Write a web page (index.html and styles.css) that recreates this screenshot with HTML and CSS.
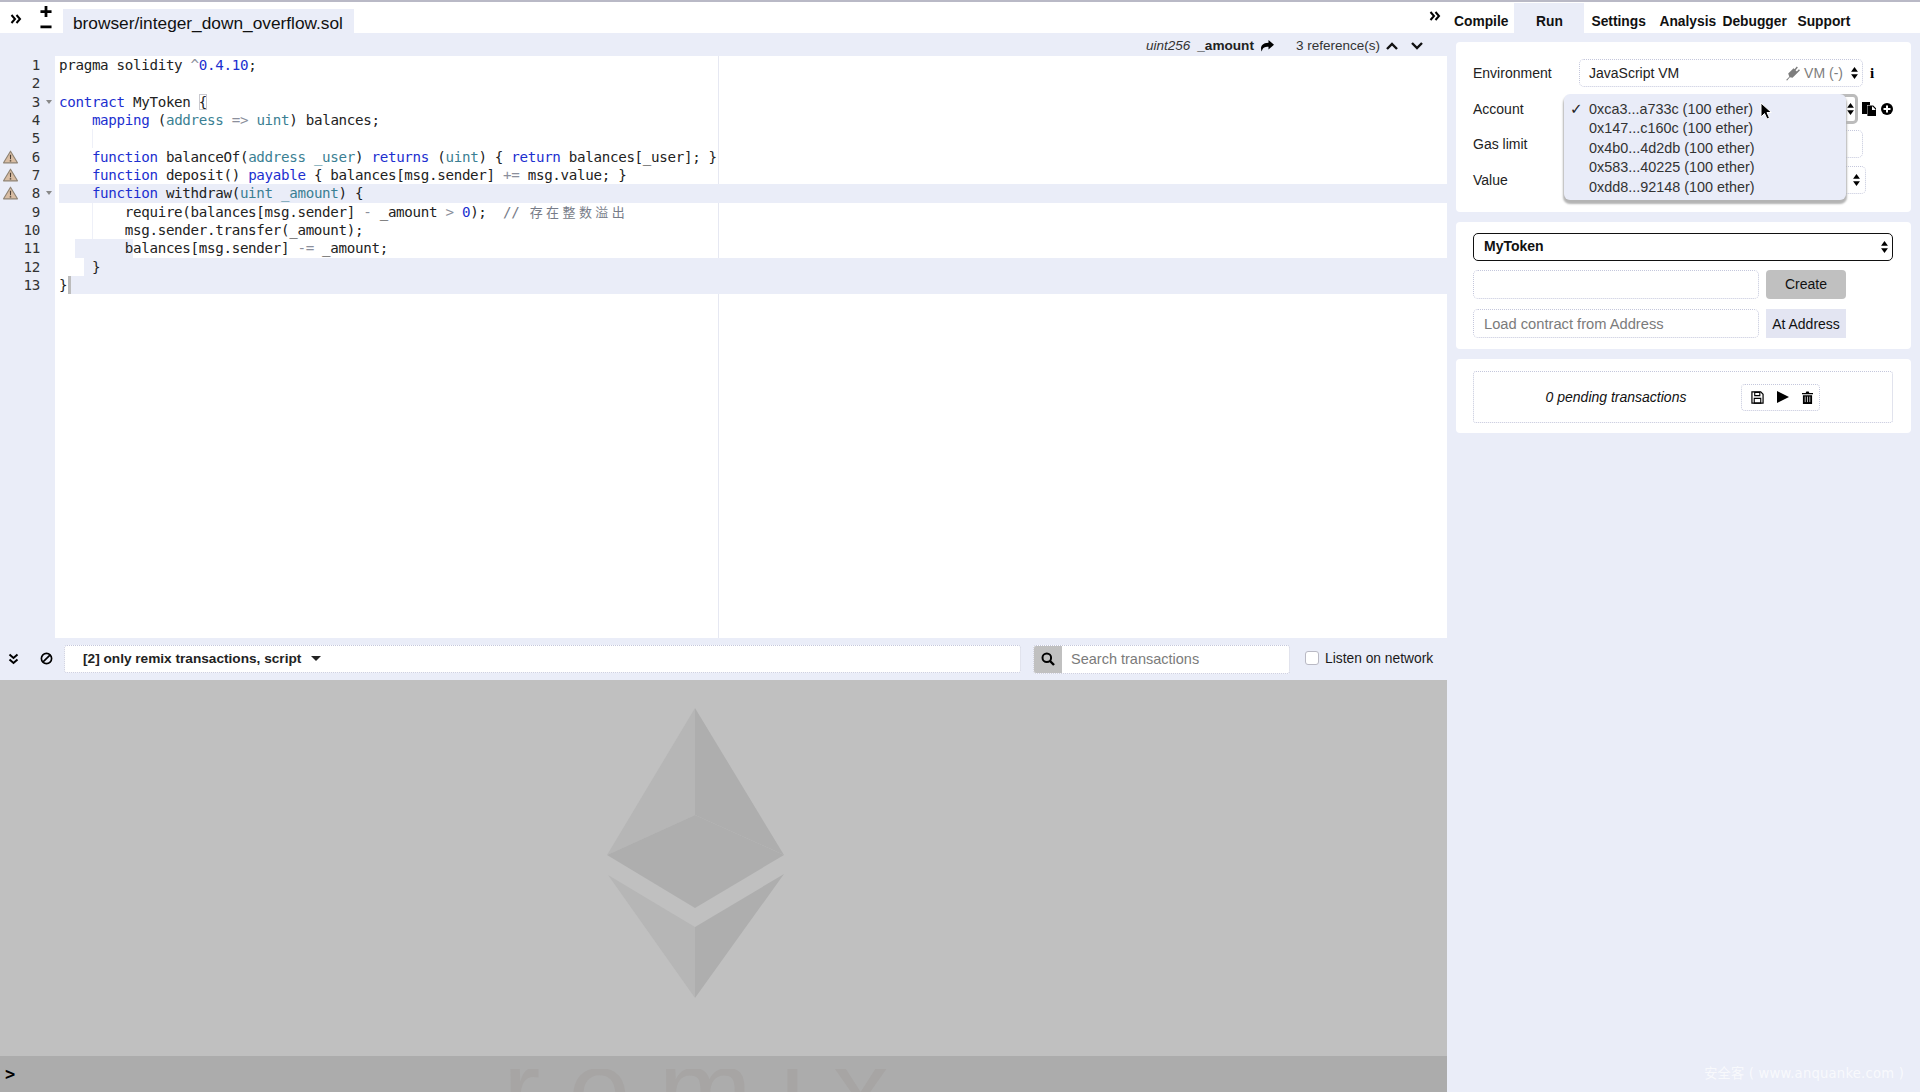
FILE: index.html
```html
<!DOCTYPE html>
<html lang="en">
<head>
<meta charset="utf-8">
<title>Remix</title>
<link rel="stylesheet" href="styles.css">
</head>
<body>
<svg class="sprite" aria-hidden="true">
  <defs>
    <symbol id="updown" viewBox="0 0 8 14"><path d="M4 0 8 5.5H0zM4 14 0 8.5H8z"/></symbol>
    <symbol id="warn" viewBox="0 0 16 14"><path d="M8 .8 15.4 13.2H.6z" fill="#d9bda3" stroke="#8f8373" stroke-width="1.2" stroke-linejoin="round"/><path d="M7.3 4.5h1.4l-.2 5h-1zM7.2 10.4h1.6v1.5H7.2z" fill="#4a3f35"/></symbol>
  </defs>
</svg>
<div class="app">
  <main class="left">
    <div class="tabbar">
      <svg class="ic-chev" viewBox="0 0 12 10"><path d="M1.5 1 5 5 1.5 9M6.5 1 10 5 6.5 9" fill="none" stroke="#000" stroke-width="2"/></svg>
      <svg class="ic-plusminus" viewBox="0 0 12 26"><path d="M4.5 0h3v4.5H12v3H7.500V12h-3V7.500H0v-3h4.500zM0 21h12v3H0z"/></svg>
      <div class="tab">browser/integer_down_overflow.sol</div>
    </div>
    <div class="edhead">
      <span class="ed-type">uint256</span>
      <span class="ed-name">_amount</span>
      <svg class="ic-share" viewBox="0 0 14 12"><path d="M8.500 0 14 4.700 8.500 9.500V6.800C4.500 6.800 2.500 7.800 1.800 11.500.4 9 0 3 8.500 2.700z"/></svg>
      <span class="ed-refs">3 reference(s)</span>
      <svg class="ic-caret" viewBox="0 0 12 8"><path d="M1 7 6 2l5 5" fill="none" stroke="#111" stroke-width="2.400"/></svg>
      <svg class="ic-caret" viewBox="0 0 12 8"><path d="M1 1 6 6l5-5" fill="none" stroke="#111" stroke-width="2.400"/></svg>
    </div>
    <div class="editor">
      <div class="gutter">
        <div class="gl"><i></i><b>1</b></div>
        <div class="gl"><i></i><b>2</b></div>
        <div class="gl"><i></i><b>3</b><em></em></div>
        <div class="gl"><i></i><b>4</b></div>
        <div class="gl"><i></i><b>5</b></div>
        <div class="gl"><svg class="ic-warn"><use href="#warn"/></svg><b>6</b></div>
        <div class="gl"><svg class="ic-warn"><use href="#warn"/></svg><b>7</b></div>
        <div class="gl"><svg class="ic-warn"><use href="#warn"/></svg><b>8</b><em></em></div>
        <div class="gl"><i></i><b>9</b></div>
        <div class="gl"><i></i><b>10</b></div>
        <div class="gl"><i></i><b>11</b></div>
        <div class="gl"><i></i><b>12</b></div>
        <div class="gl"><i></i><b>13</b></div>
      </div>
      <div class="code">
        <div class="margin"></div>
        <div class="ln">pragma solidity <span class="o">^</span><span class="n">0.4.10</span>;</div>
        <div class="ln"></div>
        <div class="ln"><span class="k">contract</span> MyToken <span class="br">{</span></div>
        <div class="ln">    <span class="k">mapping</span> (<span class="t">address</span> <span class="o">=&gt;</span> <span class="t">uint</span>) balances;</div>
        <div class="ln guide"></div>
        <div class="ln">    <span class="k">function</span> balanceOf(<span class="t">address _user</span>) <span class="k">returns</span> (<span class="t">uint</span>) { <span class="k">return</span> balances[_user]; }</div>
        <div class="ln">    <span class="k">function</span> deposit() <span class="k">payable</span> { balances[msg.sender] <span class="o">+=</span> msg.value; }</div>
        <div class="ln hl8">    <span class="k">function</span> withdraw(<span class="t">uint _amount</span>) {</div>
        <div class="ln guide">        require(balances[msg.sender] <span class="o">-</span> _amount <span class="o">&gt;</span> <span class="n">0</span>);  <span class="c">// <span class="cjk">存在整数溢出</span></span></div>
        <div class="ln guide">        msg.sender.transfer(_amount);</div>
        <div class="ln hl11">        balances[msg.sender] <span class="o">-=</span> _amount;</div>
        <div class="ln hl12">    }</div>
        <div class="ln hl13">}<span class="cursor"></span></div>
      </div>
    </div>
    <div class="termbar">
      <svg class="ic-dchev" viewBox="0 0 10 12"><path d="M1 1.500 5 5l4-3.500M1 6.500 5 10l4-3.500" fill="none" stroke="#000" stroke-width="2"/></svg>
      <svg class="ic-ban" viewBox="0 0 14 14"><circle cx="7" cy="7" r="5.500" fill="none" stroke="#000" stroke-width="1.800"/><path d="M3 11 11 3" stroke="#000" stroke-width="1.800"/></svg>
      <div class="filter">[2] only remix transactions, script<span class="tri"></span></div>
      <div class="search">
        <span class="search-ic"><svg class="ic-search" viewBox="0 0 14 14"><circle cx="5.800" cy="5.800" r="4.300" fill="none" stroke="#000" stroke-width="2"/><path d="M9 9l4 4" stroke="#000" stroke-width="2.400"/></svg></span>
        <input class="search-in" placeholder="Search transactions">
      </div>
      <label class="listen"><span class="check"></span>Listen on network</label>
    </div>
    <div class="log">
      <svg class="eth" viewBox="0 0 178 291">
        <path d="M88 0 0 147 88 107z" fill="#b6b6b6"/>
        <path d="M88 0 177 147 88 107z" fill="#aeaeae"/>
        <path d="M0 147 88 107 177 147 88 200z" fill="#aeaeae"/>
        <path d="M1 167 88 219V290z" fill="#b6b6b6"/>
        <path d="M177 166 88 219V290z" fill="#aeaeae"/>
      </svg>
    </div>
    <div class="prompt">&gt;<div class="remix-clip"><span class="remix">remix</span></div></div>
  </main>
  <aside class="right">
    <nav class="nav">
      <svg class="ic-chev nav-chev" viewBox="0 0 12 10"><path d="M1.500 1 5 5 1.500 9M6.500 1 10 5 6.500 9" fill="none" stroke="#000" stroke-width="2"/></svg>
      <span class="nav-i w-compile">Compile</span>
      <span class="nav-i nav-on">Run</span>
      <span class="nav-i w-settings">Settings</span>
      <span class="nav-i w-analysis">Analysis</span>
      <span class="nav-i w-debugger">Debugger</span>
      <span class="nav-i">Support</span>
    </nav>
    <div class="panel">
      <section class="card card-env">
        <div class="row">
          <span class="lbl">Environment</span>
          <div class="sel sel-env">JavaScript VM
            <svg class="ic-plug" viewBox="0 0 14 14"><path d="M1 13 4 10 3 7 8 2 12 6 7 11 4.500 10.500 2 13.500zM8.500 3.500 11 .5l1 1-2.500 3zM10.500 5.500 13 3l1 1-2.500 2.500z" fill="#7d7d7d"/></svg>
            <span class="vm">VM (-)</span>
            <svg class="ic-ud"><use href="#updown"/></svg>
          </div>
          <span class="info">i</span>
        </div>
        <div class="row">
          <span class="lbl">Account</span>
          <div class="sel sel-acc"><svg class="ic-ud"><use href="#updown"/></svg></div>
          <svg class="ic-copy" viewBox="0 0 14 14"><path d="M0 0h8v3H5v9H0z"/><path d="M6 4h5l3 3v7H6z" fill="#fff" stroke="#000" stroke-width="1.200"/><path d="M6 4h4v4h4v6H6z"/></svg>
          <svg class="ic-plus" viewBox="0 0 12 12"><circle cx="6" cy="6" r="6"/><path d="M5 2.500h2V5h2.500v2H7v2.500H5V7H2.500V5H5z" fill="#fff"/></svg>
        </div>
        <div class="row">
          <span class="lbl">Gas limit</span>
          <div class="sel sel-gas"></div>
        </div>
        <div class="row">
          <span class="lbl">Value</span>
          <div class="sel sel-val"><svg class="ic-ud"><use href="#updown"/></svg></div>
        </div>
        <ul class="menu">
          <li class="menu-on">0xca3...a733c (100 ether)</li>
          <li>0x147...c160c (100 ether)</li>
          <li>0x4b0...4d2db (100 ether)</li>
          <li>0x583...40225 (100 ether)</li>
          <li>0xdd8...92148 (100 ether)</li>
        </ul>
        <svg class="pointer" viewBox="0 0 12 18"><path d="M1 1V15L4.500 11.500 7 17 9.500 16 7 10.500H11.500z" fill="#000" stroke="#fff" stroke-width="1"/></svg>
      </section>
      <section class="card card-create">
        <div class="contract">MyToken<svg class="ic-ud"><use href="#updown"/></svg></div>
        <div class="crow"><input class="fld"><button class="btn btn-create">Create</button></div>
        <div class="crow"><input class="fld" placeholder="Load contract from Address"><button class="btn btn-at">At Address</button></div>
      </section>
      <section class="card card-pend">
        <div class="pending">
          <span class="pend-txt">0 pending transactions</span>
          <div class="pend-btns">
            <svg class="ic-save" viewBox="0 0 14 14"><path d="M1 1h9.500L13 3.500V13H1z" fill="none" stroke="#000" stroke-width="1.300"/><path d="M4 1.500h5.500V5H4zM3.500 8h7v5h-7z" fill="none" stroke="#000" stroke-width="1.200"/></svg>
            <svg class="ic-play" viewBox="0 0 12 12"><path d="M0 0 12 6 0 12z"/></svg>
            <svg class="ic-trash" viewBox="0 0 12 14"><path d="M0 2h4l.7-1.500h2.600L8 2h4v1.500H0zM1 4.500h10V14H1z"/><path d="M3.500 6v6M6 6v6M8.500 6v6" stroke="#fff" stroke-width=".8"/></svg>
          </div>
        </div>
      </section>
    </div>
    <div class="wm">安全客 ( www.anquanke.com )</div>
  </aside>
</div>
</body>
</html>
```

FILE: styles.css
```css
* { box-sizing: border-box; }
html, body { margin: 0; height: 100%; }
body { font-family: "Liberation Sans", Arial, sans-serif; font-size: 14px; color: #111; background: #fff; overflow: hidden; }
.sprite { position: absolute; width: 0; height: 0; }
svg { display: block; flex: none; }

.app { display: grid; grid-template-columns: 1447px 473px; height: 1092px; border-top: 2px solid #b9b9c6; }
.left { display: flex; flex-direction: column; min-width: 0; }
.right { display: flex; flex-direction: column; position: relative; }

.tabbar { height: 31px; display: flex; align-items: flex-end; background: #fff; }
.ic-chev { width: 12px; height: 10px; }
.tabbar .ic-chev { margin: 0 0 9px 10px; }
.ic-plusminus { width: 12px; height: 24px; margin: 0 0 3px 18px; }
.tab { margin-left: 11px; width: 291px; height: 24px; padding-left: 10px; background: #eaedf8; font-size: 17.300px; line-height: 29px; color: #111; white-space: nowrap; }

.edhead { height: 23px; background: #eaedf8; display: flex; align-items: center; justify-content: flex-end; padding: 2px 24px 0 0; font-size: 13.500px; }
.ed-type { font-style: italic; color: #333; margin-right: 7px; }
.ed-name { font-weight: 700; color: #222; font-size: 13.600px; }
.ic-share { width: 14px; height: 12px; margin-left: 6px; }
.ed-refs { margin-left: 22px; color: #333; }
.ic-caret { width: 12px; height: 8px; margin-left: 6px; }
.ic-caret + .ic-caret { margin-left: 13px; }

.editor { height: 582px; display: flex; background: #fff; }
.gutter { width: 55px; background: #eaedf8; flex: none; }
.gl { height: 18.330px; display: grid; grid-template-columns: 15px 22px 1fr; padding-left: 3px; align-items: center; }
.gl b { font: 400 14.200px/18px "DejaVu Sans Mono", monospace; letter-spacing: -.3px; text-align: right; color: #333; grid-column: 2; }
.gl em { width: 0; height: 0; margin-left: 6px; border: 3px solid transparent; border-top: 4px solid #888; border-bottom: 0; }
.ic-warn { width: 15px; height: 14px; }
.code { flex: 1; position: relative; font: 14.200px/18.330px "DejaVu Sans Mono", "Liberation Mono", monospace; letter-spacing: -.32px; padding-left: 4px; color: #222; min-width: 0; }
.margin { position: absolute; left: 663px; top: 0; bottom: 0; width: 1px; background: #e6e8f2; }
.ln { height: 18.330px; white-space: pre; position: relative; margin-left: -4px; padding-left: 4px; }
.k { color: #1c2fd0; }
.t { color: #3b7f93; }
.n { color: #1c2fd0; }
.o { color: #8b8f9c; }
.c { color: #777c88; }
.cjk { font-family: "Noto Sans CJK SC", sans-serif; font-size: 13px; letter-spacing: 3.400px; margin-left: 2px; }
.br { outline: 1px solid #c9c9cf; outline-offset: -1px; }
.guide { background: linear-gradient(#eef0f8, #eef0f8) 37px 0 / 1px 100% no-repeat; }
.hl8 { background: linear-gradient(to right, transparent 4px, #eaedf8 4px); }
.hl11 { background: linear-gradient(to right, transparent 20px, #eaedf8 20px, #eaedf8 78px, transparent 78px); }
.hl12 { background: linear-gradient(to right, transparent 29px, #eaedf8 29px); }
.hl13 { background: linear-gradient(to right, transparent 15px, #eaedf8 15px); }
.cursor { display: inline-block; width: 3px; height: 18px; background: #bcbcbc; vertical-align: top; margin-left: 1px; }

.termbar { height: 42px; background: #eaedf8; display: flex; align-items: center; }
.ic-dchev { width: 11px; height: 12px; margin: -1px 0 0 8px; }
.ic-ban { width: 13px; height: 13px; margin: -1px 0 0 21px; }
.filter { width: 957px; height: 28px; margin-left: 11px; background: #fff; border: 1px dotted #c4c7dc; border-radius: 3px; padding: 0 0 1px 18px; font-weight: 700; font-size: 13.650px; color: #222; display: flex; align-items: center; }
.tri { width: 0; height: 0; margin-left: 10px; border: 5px solid transparent; border-top: 5px solid #222; border-bottom: 0; }
.search { width: 257px; height: 29px; margin-left: 12px; display: flex; background: #fff; border-radius: 3px; border: 1px dotted #c4c7dc; overflow: hidden; }
.search-ic { width: 29px; background: #c0c0c0; display: flex; align-items: center; justify-content: center; margin: -1px 0 -1px -1px; }
.ic-search { width: 14px; height: 14px; }
.search-in { border: 0; outline: 0; background: transparent; flex: 1; min-width: 0; padding: 0 0 0 9px; font: 14.500px "Liberation Sans", sans-serif; }
input::placeholder { color: #7b7b7b; opacity: 1; }
.listen { display: flex; align-items: center; margin: -2px 0 0 15px; font-size: 13.800px; color: #1a1a1a; }
.check { width: 14px; height: 14px; background: #fff; border: 1px solid #b9b9c4; border-radius: 3px; margin-right: 6px; }

.log { flex: 1; background: #c0c0c0; padding: 28px 0 0 607px; min-height: 0; }
.eth { width: 178px; height: 291px; }
.prompt { height: 36px; background: #acacac; position: relative; overflow: hidden; padding: 4px 0 0 5px; font: 700 17px/28px "DejaVu Sans Mono", monospace; color: #000; }
.remix-clip { position: absolute; left: 0; right: 0; top: 13px; bottom: 0; overflow: hidden; }
.remix { position: absolute; left: 503px; top: -43px; font: 400 112px/128px "Liberation Sans", sans-serif; letter-spacing: 28px; color: #a7a5a4; }

.nav { height: 31px; display: flex; align-items: flex-end; background: #fff; font-weight: 700; font-size: 13.800px; color: #111; }
.nav-chev { margin: 0 0 12px -18px; position: relative; }
.nav-i { height: 30px; line-height: 37px; margin-left: 7px; }
.w-compile { margin-left: 13px; }
.nav-on { width: 70px; margin-left: 6px; text-align: center; background: #eaedf8; }
.w-settings { width: 61px; }
.w-analysis { width: 56px; margin-left: 7px; }
.w-debugger { width: 68px; margin-left: 7px; }
.panel { flex: 1; background: #eaedf8; padding: 9px 9px 0; display: flex; flex-direction: column; gap: 10px; }
.card { background: #fff; border-radius: 4px; position: relative; }
.card-env { height: 170px; padding: 17px 0 0 17px; display: flex; flex-direction: column; gap: 7.500px; }
.row { height: 28px; display: flex; align-items: center; }
.lbl { width: 106px; font-size: 14px; color: #222; }
.sel { height: 28px; background: #fff; border: 1px dotted #c4c7dc; border-radius: 5px; display: flex; align-items: center; padding-left: 9px; font-size: 14px; color: #222; }
.sel-env { width: 284px; }
.ic-plug { width: 15px; height: 15px; margin-left: auto; }
.vm { color: #7d7d7d; margin-left: 4px; }
.ic-ud { width: 7px; height: 12px; margin: 0 4px 0 8px; }
.info { font: 700 15px/1 "Liberation Serif", serif; margin-left: 7px; color: #000; }
.sel-acc { width: 279px; height: 30px; border: 3px solid #bcbcbc; justify-content: flex-end; padding: 0; }
.sel-acc .ic-ud { margin: 0 1px 0 0; }
.ic-copy { width: 14px; height: 14px; margin-left: 4px; }
.ic-plus { width: 12px; height: 12px; margin-left: 5px; }
.sel-gas { width: 284px; }
.sel-val { width: 287px; justify-content: flex-end; padding: 0; }
.sel-val .ic-ud { margin: 0 5px 0 0; }
.menu { position: absolute; left: 108px; top: 52px; width: 282px; height: 106px; margin: 0; padding: 5.500px 0 0; list-style: none; background: #e9ecf8; border-radius: 6px; box-shadow: 0 3px 2px 1px #b4b4b4; font-size: 14.400px; color: #333; }
.menu li { height: 19.600px; line-height: 19.600px; padding-left: 25px; position: relative; }
.menu-on::before { content: "✓"; position: absolute; left: 6px; color: #222; font: 700 15px/19.600px "DejaVu Sans", sans-serif; }
.pointer { position: absolute; left: 304px; top: 60px; width: 12px; height: 18px; }

.card-create { height: 127px; padding: 11px 18px 0 17px; display: flex; flex-direction: column; }
.contract { height: 28px; border: 1px solid #111; border-radius: 5px; padding: 0 0 2px 10px; font-weight: 700; font-size: 14px; color: #111; display: flex; align-items: center; justify-content: space-between; }
.contract .ic-ud { margin: 2px 4px 0 0; }
.crow { display: flex; margin-top: 9px; height: 29px; gap: 7px; }
.crow + .crow { margin-top: 10px; }
.fld { width: 286px; height: 29px; border: 1px dotted #c4c7dc; border-radius: 5px; background: #fff; padding: 0 10px; font: 14.700px "Liberation Sans", sans-serif; outline: 0; }
.btn { width: 80px; height: 29px; border: 0; padding: 0; font: 14px "Liberation Sans", sans-serif; color: #111; }
.btn-create { background: #c0c0c0; border-radius: 4px; padding-bottom: 2px; }
.btn-at { background: #e3e5f2; }

.card-pend { height: 74px; padding: 12px 18px 0 17px; }
.pending { height: 52px; border: 1px dotted #c4c7dc; border-radius: 3px; display: flex; align-items: center; }
.pend-txt { width: 267px; padding-left: 17px; text-align: center; font-style: italic; font-size: 14px; color: #111; }
.pend-btns { width: 79px; height: 27px; border: 1px dotted #c4c7dc; border-radius: 4px; display: flex; align-items: center; justify-content: center; gap: 13px; padding-left: 2px; }
.ic-save { width: 13px; height: 13px; }
.ic-play { width: 12px; height: 12px; }
.ic-trash { width: 11px; height: 13px; }

.wm { position: absolute; right: 16px; bottom: 9px; font: 13.200px/18px "DejaVu Sans", "Noto Sans CJK SC", sans-serif; letter-spacing: .2px; color: rgba(255,255,255,.7); white-space: nowrap; }
```
